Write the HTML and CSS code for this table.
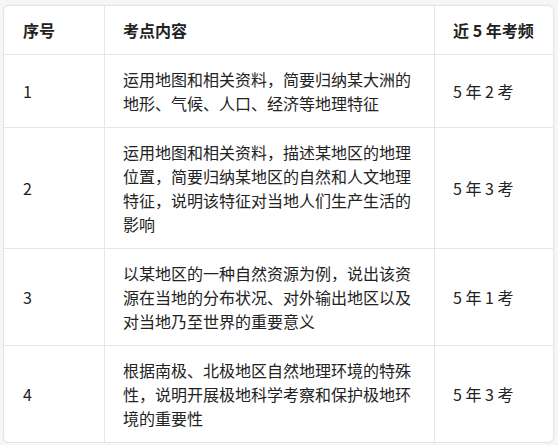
FILE: index.html
```html
<!DOCTYPE html>
<html lang="zh-CN">
<head>
<meta charset="utf-8">
<link rel="stylesheet" href="styles.css">
</head>
<body>
<div class="card">
  <table class="grid">
    <colgroup>
      <col class="c-num">
      <col class="c-text">
      <col class="c-freq">
    </colgroup>
    <thead>
      <tr>
        <th>序号</th>
        <th>考点内容</th>
        <th>近 5 年考频</th>
      </tr>
    </thead>
    <tbody>
      <tr>
        <td>1</td>
        <td>运用地图和相关资料，简要归纳某大洲的地形、气候、人口、经济等地理特征</td>
        <td>5 年 2 考</td>
      </tr>
      <tr>
        <td>2</td>
        <td>运用地图和相关资料，描述某地区的地理位置，简要归纳某地区的自然和人文地理特征，说明该特征对当地人们生产生活的影响</td>
        <td>5 年 3 考</td>
      </tr>
      <tr>
        <td>3</td>
        <td>以某地区的一种自然资源为例，说出该资源在当地的分布状况、对外输出地区以及对当地乃至世界的重要意义</td>
        <td>5 年 1 考</td>
      </tr>
      <tr>
        <td>4</td>
        <td>根据南极、北极地区自然地理环境的特殊性，说明开展极地科学考察和保护极地环境的重要性</td>
        <td>5 年 3 考</td>
      </tr>
    </tbody>
  </table>
</div>
</body>
</html>
```

FILE: styles.css
```css
html, body {
  margin: 0;
  padding: 0;
  background: #f6f6f6;
}

body {
  padding: 5px 0 0 3px;
  font-family: "Noto Sans CJK SC", "Noto Sans", sans-serif;
  color: #222;
}

.card {
  width: 549px;
  background: #fff;
  border: 1px solid #e4e4e4;
  border-radius: 6px;
  overflow: hidden;
  box-shadow: 0 0 2px rgba(0, 0, 0, 0.06);
}

.grid {
  width: 549px;
  table-layout: fixed;
  border-collapse: separate;
  border-spacing: 0;
}

.c-num { width: 101px; }
.c-text { width: 330px; }
.c-freq { width: 118px; }

.grid th,
.grid td {
  padding: 12px 18px 12px 18px;
  font-size: 16px;
  line-height: 24px;
  text-align: left;
  vertical-align: middle;
  border-right: 1px solid #e6e6e6;
  border-bottom: 1px solid #e6e6e6;
}

.grid th:first-child,
.grid td:first-child {
  padding-left: 19px;
}

.grid th:last-child,
.grid td:last-child {
  border-right: none;
}

.grid tbody tr:last-child td {
  border-bottom: none;
}

.grid th {
  font-weight: 700;
}
```
